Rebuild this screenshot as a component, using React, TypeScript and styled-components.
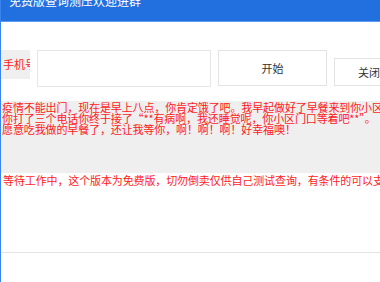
import styled, { createGlobalStyle } from "styled-components";

const GlobalStyle = createGlobalStyle`
  html, body {
    margin: 0;
    padding: 0;
    background: #ffffff;
    overflow: hidden;
  }
  body {
    font-family: "Noto Sans CJK SC", "Noto Sans", sans-serif;
  }
`;

const noticeLines = [
  "疫情不能出门，现在是早上八点，你肯定饿了吧。我早起做好了早餐来到你小区门口，给",
  "你打了三个电话你终于接了“**有病啊，我还睡觉呢，你小区门口等着吧**”。",
  "愿意吃我做的早餐了，还让我等你，啊！啊！啊！好幸福噢！",
];

export default function App() {
  return (
    <>
      <GlobalStyle />
      <Window>
        <TitleBar>
          <span className="title">免费版查询测压欢迎进群</span>
        </TitleBar>
        <Body>
          <InputRow>
            <FieldLabel>手机号</FieldLabel>
            <PhoneInput />
            <ActionButton>开始</ActionButton>
            <ActionButton $compact>关闭</ActionButton>
          </InputRow>
          <NoticePanel>
            {noticeLines.map((line) => (
              <div key={line}>{line}</div>
            ))}
          </NoticePanel>
          <StatusLine>等待工作中，这个版本为免费版，切勿倒卖仅供自己测试查询，有条件的可以支持一下</StatusLine>
        </Body>
        <Footer />
      </Window>
    </>
  );
}

const Window = styled.div`
  width: 380px;
  height: 282px;
  display: flex;
  flex-direction: column;
  border-left: 1px solid #3a84ef;
  box-sizing: border-box;
  overflow: hidden;
`;

const TitleBar = styled.div`
  height: 21px;
  flex-shrink: 0;
  background: #2270e0;
  border-bottom: 1px solid #5c9bf2;
  color: #ffffff;
  padding-left: 8px;
  overflow: hidden;

  .title {
    display: block;
    font-size: 12px;
    line-height: 12px;
    margin-top: -5px;
    white-space: nowrap;
  }
`;

const Body = styled.div`
  flex: 1;
  display: flex;
  flex-direction: column;
  padding-top: 28px;
  min-height: 0;
`;

const InputRow = styled.div`
  display: flex;
  align-items: flex-start;
  gap: 7px;
`;

const FieldLabel = styled.div`
  width: 27px;
  height: 29px;
  flex-shrink: 0;
  padding-left: 2px;
  background: #efefef;
  color: #ff1a1a;
  font-size: 11px;
  line-height: 29px;
  white-space: nowrap;
  overflow: hidden;
`;

const PhoneInput = styled.input`
  width: 174px;
  height: 37px;
  flex-shrink: 0;
  box-sizing: border-box;
  border: 1px solid #e6e6e6;
  outline: none;
  background: #ffffff;
`;

const ActionButton = styled.button<{ $compact?: boolean }>`
  flex-shrink: 0;
  width: ${(p) => (p.$compact ? "70px" : "109px")};
  height: ${(p) => (p.$compact ? "28px" : "36px")};
  margin-top: ${(p) => (p.$compact ? "8px" : "0")};
  box-sizing: border-box;
  border: 1px solid #e3e3e3;
  background: #ffffff;
  color: #333333;
  font-family: "Noto Sans CJK SC", sans-serif;
  font-size: 11px;
  padding: 0;
`;

const NoticePanel = styled.div`
  margin-top: 14px;
  height: 72px;
  box-sizing: border-box;
  padding: 1px 0 0 1px;
  background: #efefef;
  color: #ff1a1a;
  font-size: 11px;
  line-height: 11px;
  letter-spacing: -0.12px;
  white-space: nowrap;
  overflow: hidden;
`;

const StatusLine = styled.div`
  padding: 1px 0 0 2px;
  color: #ff1a1a;
  font-size: 11px;
  line-height: 13px;
  letter-spacing: -0.12px;
  white-space: nowrap;
  overflow: hidden;
`;

const Footer = styled.div`
  height: 30px;
  flex-shrink: 0;
  box-sizing: border-box;
  border-top: 1px solid #e4e4e4;
`;
